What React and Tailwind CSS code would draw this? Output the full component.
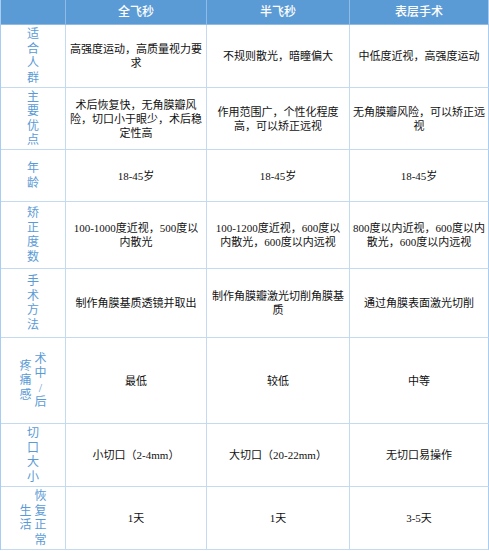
import React from 'react';

const rows = [
  {
    h: 'h-[63px]',
    label: [['适', '合', '人', '群']],
    cells: ['高强度运动，高质量视力要求', '不规则散光，暗瞳偏大', '中低度近视，高强度运动'],
  },
  {
    h: 'h-[62px]',
    label: [['主', '要', '优', '点']],
    cells: [
      '术后恢复快，无角膜瓣风险，切口小于眼少，术后稳定性高',
      '作用范围广，个性化程度高，可以矫正远视',
      '无角膜瓣风险，可以矫正远视',
    ],
  },
  {
    h: 'h-[52px]',
    label: [['年', '龄']],
    cells: ['18-45岁', '18-45岁', '18-45岁'],
  },
  {
    h: 'h-[67px]',
    label: [['矫', '正', '度', '数']],
    cells: [
      '100-1000度近视，500度以内散光',
      '100-1200度近视，600度以内散光，600度以内远视',
      '800度以内近视，600度以内散光，600度以内远视',
    ],
  },
  {
    h: 'h-[69px]',
    label: [['手', '术', '方', '法']],
    cells: ['制作角膜基质透镜并取出', '制作角膜瓣激光切削角膜基质', '通过角膜表面激光切削'],
  },
  {
    h: 'h-[86px]',
    label: [['术', '中', '/', '后'], ['疼', '痛', '感']],
    cells: ['最低', '较低', '中等'],
  },
  {
    h: 'h-[63px]',
    label: [['切', '口', '大', '小']],
    cells: ['小切口（2-4mm）', '大切口（20-22mm）', '无切口易操作'],
  },
  {
    h: 'h-[63px]',
    label: [['恢', '复', '正', '常'], ['生', '活']],
    cells: ['1天', '1天', '3-5天'],
  },
];

const font = "font-['Liberation_Serif','Noto_Sans_CJK_SC',serif]";

function Label({ cols }) {
  return (
    <div className="flex flex-row-reverse items-center justify-center gap-[3px]">
      {cols.map((col, i) => (
        <div key={i} className="flex flex-col items-center text-[12px] leading-[14.5px] text-[#5b9bd5]">
          {col.map((c, j) => (
            <span key={j}>{c}</span>
          ))}
        </div>
      ))}
    </div>
  );
}

export default function App() {
  return (
    <div className={`w-[489px] bg-white ${font}`}>
      <div className="grid grid-cols-[65px_141px_143px_139px] border-l border-[#a9cdf0]">
        <div className="h-[25px] bg-[#5b9bd5] border-r border-b border-[#8fbbe6]" />
        {['全飞秒', '半飞秒', '表层手术'].map((t, i) => (
          <div
            key={t}
            className={`h-[25px] bg-[#5b9bd5] border-b border-[#8fbbe6] flex items-center justify-center text-[12px] font-medium text-white ${i === 2 ? 'border-r border-r-[#a9cdf0]' : 'border-r'}`}
          >
            {t}
          </div>
        ))}
        {rows.map((r, ri) => (
          <React.Fragment key={ri}>
            <div className={`${r.h} border-r border-b border-[#c3daf1] flex items-center justify-center`}>
              <Label cols={r.label} />
            </div>
            {r.cells.map((c, ci) => (
              <div
                key={ci}
                className={`${r.h} border-b border-[#c3daf1] flex items-center justify-center text-center text-[11px] leading-[14px] text-[#111] ${ci === 2 ? 'px-[2px] border-r border-r-[#a9cdf0]' : 'px-[4px] border-r'}`}
              >
                <span>{c}</span>
              </div>
            ))}
          </React.Fragment>
        ))}
      </div>
    </div>
  );
}
